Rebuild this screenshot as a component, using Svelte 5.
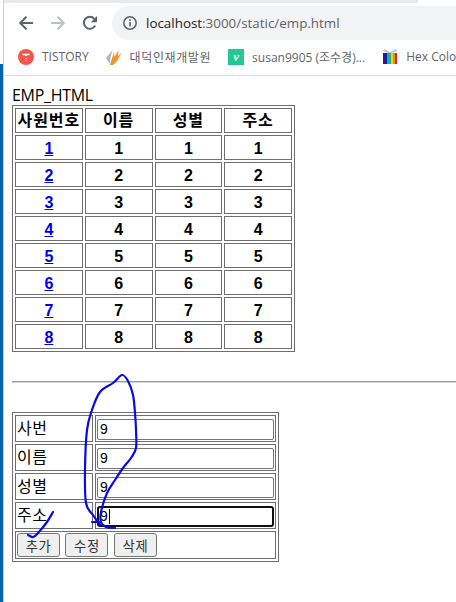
<script>
  const rows = [1, 2, 3, 4, 5, 6, 7, 8];
  const fields = [
    { label: '사번', value: '9' },
    { label: '이름', value: '9' },
    { label: '성별', value: '9' },
    { label: '주소', value: '9', focused: true },
  ];
  const bands = ['#2a1a8c', '#1a1ab0', '#18a8c8', '#2fb84a', '#e8d820', '#f08a18', '#d8281c'];

  // 점 목록 → 부드러운 곡선
  function smooth(pts) {
    let d = `M${pts[0][0]} ${pts[0][1]}`;
    for (let i = 0; i < pts.length - 1; i++) {
      const p0 = pts[i - 1] || pts[i], p1 = pts[i], p2 = pts[i + 1], p3 = pts[i + 2] || p2;
      const c1 = [p1[0] + (p2[0] - p0[0]) / 6, p1[1] + (p2[1] - p0[1]) / 6];
      const c2 = [p2[0] - (p3[0] - p1[0]) / 6, p2[1] - (p3[1] - p1[1]) / 6];
      d += ` C${c1[0]} ${c1[1]} ${c2[0]} ${c2[1]} ${p2[0]} ${p2[1]}`;
    }
    return d;
  }
  const loop = smooth([[115, 528], [106, 527], [101, 522], [101, 512], [107, 493], [115, 480], [123, 468], [131, 458], [136, 448], [136, 430], [135, 413], [133, 395], [128, 381], [122, 375], [113, 383], [100, 392], [92, 410], [87, 430], [85, 470], [86, 503], [93, 515], [100, 525]]);
  const tick = smooth([[53, 512], [47, 522], [38, 533], [33, 537], [28, 535]]);
</script>

<div class="shell">
  <div class="desk"></div>
  <div class="win">
    <div class="tabstrip"></div>
    <div class="toolbar">
      <button class="nav" aria-label="back">
        <svg width="16" height="16" viewBox="0 0 16 16"><path d="M15 8H2.500M8.500 1.800 2.200 8l6.300 6.200" fill="none" stroke="#5f6368" stroke-width="2"/></svg>
      </button>
      <button class="nav" aria-label="forward">
        <svg width="16" height="16" viewBox="0 0 16 16"><path d="M1 8h12.500M7.500 1.800 13.800 8l-6.300 6.200" fill="none" stroke="#bdc1c6" stroke-width="2"/></svg>
      </button>
      <button class="nav" aria-label="reload">
        <svg width="16" height="16" viewBox="0 0 16 16"><path d="M13.200 10.600A6 6 0 1 1 12.400 3.800" fill="none" stroke="#5f6368" stroke-width="2"/><path d="M15 1v6.200H8.800z" fill="#5f6368"/></svg>
      </button>
      <div class="omni">
        <svg width="16" height="16" viewBox="0 0 16 16"><circle cx="8" cy="8" r="6.200" fill="none" stroke="#5f6368" stroke-width="1.500"/><path d="M8 7v4.500M8 4.300v1.600" stroke="#5f6368" stroke-width="1.600"/></svg>
        <span class="url">localhost<span class="path">:3000/static/emp.html</span></span>
      </div>
    </div>
    <div class="bookmarks">
      <div class="mark">
        <svg width="16" height="16" viewBox="0 0 16 16"><circle cx="8" cy="8" r="8" fill="#f8544a"/><path d="M4.500 5.500h7M8 5.500v1.500M8 9v1M8 11.500v.5" stroke="#fff" stroke-width="1.500"/></svg>
        <span>TISTORY</span>
      </div>
      <div class="mark">
        <svg width="16" height="16" viewBox="0 0 16 16">
          <path d="M0 9 6.500 1 4.500 8 4 15z" fill="#b4b4b4"/>
          <path d="M4 16 8 2.500 8.500 8 12.500 1 12 7.500 16 3 11.500 11.500 7 16z" fill="#f0922e"/>
        </svg>
        <span class="ko">대덕인재개발원</span>
      </div>
      <div class="mark">
        <span class="vimeo">v</span>
        <span>susan9905 (조수경)...</span>
      </div>
      <div class="mark">
        <svg width="16" height="17" viewBox="0 0 16 17">
          <path d="M1 3 8 6l7-3-1-2-6 3-6-3z" fill="#c4c4c4"/>
          {#each bands as c, i}
            <rect x={1 + i * 2} y="5" width="2" height="11" fill={c} />
          {/each}
        </svg>
        <span>Hex Color</span>
      </div>
    </div>

    <main>
      <div class="title">EMP_HTML</div>
      <table class="emp">
        <thead>
          <tr><th>사원번호</th><th>이름</th><th>성별</th><th>주소</th></tr>
        </thead>
        <tbody>
          {#each rows as n}
            <tr>
              <td><a href="#{n}">{n}</a></td>
              <td>{n}</td>
              <td>{n}</td>
              <td>{n}</td>
            </tr>
          {/each}
        </tbody>
      </table>

      <hr />

      <table class="form">
        <tbody>
          {#each fields as f}
            <tr>
              <td class="lbl">{f.label}</td>
              <td class="val"><div class="input" class:focused={f.focused}>{f.value}{#if f.focused}<i class="caret"></i>{/if}</div></td>
            </tr>
          {/each}
          <tr>
            <td colspan="2" class="acts">
              <button class="btn">추가</button>
              <button class="btn">수정</button>
              <button class="btn">삭제</button>
            </td>
          </tr>
        </tbody>
      </table>
    </main>
  </div>

  <!-- 손으로 그린 펜 자국 -->
  <svg class="ink" width="456" height="602" viewBox="0 0 456 602">
    <path d={loop} />
    <path d="M92 522H101" />
    <path d={tick} />
  </svg>
</div>

<style>
  :global(body) { margin: 0; background: #fff; }

  .shell { position: relative; display: flex; height: 602px; overflow: hidden; font-family: "Liberation Sans", "Noto Sans CJK KR", sans-serif; }
  .desk { width: 3px; margin-top: 64px; background: #0563b0; }
  .win { flex: 1; min-width: 0; border-left: 1px solid #cfcfcf; background: #fff; }

  .tabstrip { height: 3px; width: 414px; background: #e8eaed; }

  .toolbar { display: flex; align-items: center; height: 36px; padding-left: 6px; margin-top: 2px; }
  .nav { width: 32px; height: 32px; display: flex; align-items: center; justify-content: center; border: 0; padding: 0; background: none; }
  .omni { flex: 1; height: 34px; margin-left: 6px; padding-left: 10px; display: flex; align-items: center; gap: 8px; background: #f1f3f4; border-radius: 17px 0 0 17px; }
  .url { font-family: "Open Sans", sans-serif; font-size: 13.400px; color: #202124; white-space: nowrap; }
  .path { color: #5f6368; }

  .bookmarks { box-sizing: border-box; display: flex; align-items: center; height: 35px; padding: 0 0 3px 14px; gap: 17px; border-bottom: 1px solid #dadce0; white-space: nowrap; overflow: hidden; font-family: "Open Sans", "Noto Sans CJK KR", sans-serif; font-size: 12px; color: #5f6368; }
  .mark { display: flex; align-items: center; gap: 8px; flex-shrink: 0; }
  .ko { letter-spacing: .6px; }
  .vimeo { width: 16px; height: 16px; background: #1fc98f; color: #fff; font: italic bold 13px/15px "Liberation Serif", serif; text-align: center; }

  main { padding: 10px 0 0 8px; }
  .title { font-size: 16px; line-height: 19px; letter-spacing: -0.300px; color: #000; font-family: "Open Sans", sans-serif; }

  table { border-collapse: separate; border-spacing: 2px; border: 1px solid #6e6e6e; }
  td, th { border: 1px solid #6e6e6e; padding: 1px; line-height: 18px; }

  .emp { table-layout: fixed; width: 282px; box-sizing: border-box; color: #000; font-size: 16px; font-weight: 700; text-align: center; }
  .emp { width: 283px; }
  .emp td, .emp th { height: 25px; box-sizing: border-box; font-weight: 700; }
  .emp td { padding-top: 2px; padding-bottom: 0; }
  .emp th { letter-spacing: 1px; padding: 1px 0 0; }
  .emp a { color: #0000ee; }

  hr { margin: 29px 0 29px; border: 0; border-top: 1px solid #9a9a9a; border-bottom: 1px solid #d4d4d4; height: 0; background: none; }

  .form { width: 267px; box-sizing: border-box; font-size: 16px; color: #000; }
  .form td { box-sizing: border-box; height: 27px; }
  .lbl { width: 78px; font-size: 16px; letter-spacing: .5px; }
  .val { padding: 1px; vertical-align: bottom; }
  .input { box-sizing: border-box; height: 21px; border: 1px solid #767676; border-radius: 2px; padding: 0 2px; font-size: 14px; line-height: 19px; }
  .input.focused { border: 2px solid #101010; border-radius: 3px; line-height: 17px; padding: 0 1px; }
  .caret { display: inline-block; width: 1px; height: 15px; margin-left: 1px; background: #000; vertical-align: -3px; }

  .form .acts { padding: 1px; height: 28px; }
  .btn { box-sizing: border-box; width: 43px; height: 24px; margin-right: 1px; padding: 0; background: #efefef; border: 1px solid #767676; border-radius: 3px; font-family: "Noto Sans CJK KR", sans-serif; font-size: 13.300px; letter-spacing: .6px; color: #333; }

  .ink { position: absolute; left: 0; top: 0; pointer-events: none; }
  .ink path { fill: none; stroke: #0a0ae6; stroke-width: 2.200; stroke-linejoin: round; stroke-linecap: round; }
</style>
